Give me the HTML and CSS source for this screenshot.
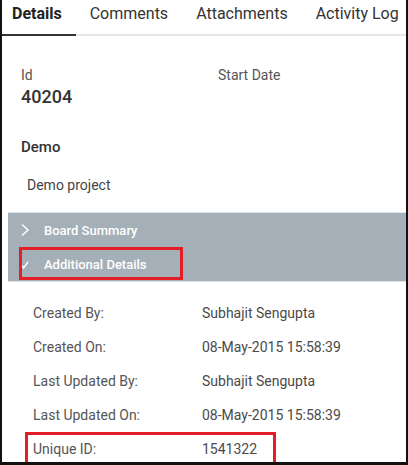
FILE: index.html
```html
<!DOCTYPE html>
<html lang="en">
<head>
  <meta charset="UTF-8">
  <title>Details</title>
  <link rel="stylesheet" href="styles.css">
</head>
<body>

  <div class="frame">
    <!-- Tabs -->
    <div class="tabs">
      <div class="tab active">Details</div>
      <div class="tab">Comments</div>
      <div class="tab">Attachments</div>
      <div class="tab">Activity Log</div>
    </div>

    <div class="summary">
      <div class="meta">
        <div class="field">
          <div class="field-label">Id</div>
          <div class="field-value">40204</div>
        </div>
        <div class="field">
          <div class="field-label">Start Date</div>
        </div>
      </div>
      <div class="title">Demo</div>
      <div class="desc">Demo project</div>
    </div>

    <!-- Collapsible sections -->
    <div class="sections">
      <div class="section-head">
        <svg class="chev" width="10" height="14" viewBox="0 0 10 14">
          <polyline points="2,1.5 8,7 2,12.5" fill="none" stroke="#fff" stroke-width="1.4"/>
        </svg>
        <span>Board Summary</span>
      </div>
      <div class="section-head open">
        <svg class="chev" width="10" height="14" viewBox="0 0 10 14">
          <polyline points="2,8.5 3.5,11 8,5" fill="none" stroke="#fff" stroke-width="1.4"/>
        </svg>
        <span>Additional Details</span>
      </div>
    </div>

    <div class="info">
      <div class="row"><span class="label">Created By:</span><span class="value">Subhajit Sengupta</span></div>
      <div class="row"><span class="label">Created On:</span><span class="value">08-May-2015 15:58:39</span></div>
      <div class="row"><span class="label">Last Updated By:</span><span class="value">Subhajit Sengupta</span></div>
      <div class="row"><span class="label">Last Updated On:</span><span class="value">08-May-2015 15:58:39</span></div>
      <div class="row marked"><span class="label">Unique ID:</span><span class="value">1541322</span></div>
    </div>
  </div>

</body>
</html>
```

FILE: styles.css
```css
body {
  margin: 0;
  font-family: Roboto, "Liberation Sans", sans-serif;
  background: #fff;
}

.frame {
  width: 408px;
  height: 465px;
  box-sizing: border-box;
  border-left: 2px solid #111;
  border-right: 2px solid #111;
  border-bottom: 3px solid #111;
  overflow: hidden;
}

/* Tabs */
.tabs {
  display: flex;
  border-bottom: 2px solid #e6e6e6;
  white-space: nowrap;
}
.tab {
  padding: 0 14px 6px;
  line-height: 28px;
  font-size: 16px;
  color: #333;
}
.tab.active {
  padding-left: 10px;
  font-weight: 700;
  color: #222;
  border-bottom: 2px solid #333;
  margin-bottom: -2px;
}

/* Summary */
.summary {
  padding-left: 19px;
}
.meta {
  display: grid;
  grid-template-columns: 197px 1fr;
  margin-top: 29px;
}
.field-label {
  font-size: 14px;
  line-height: 20px;
  color: #555;
}
.field-value {
  font-size: 18px;
  line-height: 24px;
  font-weight: 500;
  color: #333;
}
.title {
  margin-top: 28px;
  font-size: 15px;
  line-height: 20px;
  font-weight: 500;
  color: #333;
}
.desc {
  margin-top: 18px;
  padding-left: 6px;
  font-size: 14px;
  line-height: 20px;
  color: #444;
}

/* Sections */
.sections {
  margin: 17px 0 0 6px;
  background: #a4afb7;
  border-top: 1px solid #dde2e6;
  border-bottom: 1px solid #dde2e6;
}
.section-head {
  display: flex;
  align-items: center;
  height: 34px;
  padding-left: 12px;
  font-size: 13px;
  font-weight: 500;
  color: #fff;
  position: relative;
}
.section-head .chev {
  margin-right: 14px;
}
.section-head.open::after {
  content: "";
  position: absolute;
  left: 11px;
  top: 0;
  width: 158px;
  height: 27px;
  border: 3px solid #e41e26;
}

/* Info rows */
.info {
  margin-top: 14px;
  padding-left: 31px;
}
.row {
  display: flex;
  height: 34px;
  align-items: center;
  font-size: 14px;
  color: #555;
  position: relative;
}
.label {
  width: 169px;
}
.value {
  color: #4a4a4a;
}
.row.marked::after {
  content: "";
  position: absolute;
  left: -8px;
  top: 0;
  width: 245px;
  height: 40px;
  border: 3px solid #e41e26;
}
```
